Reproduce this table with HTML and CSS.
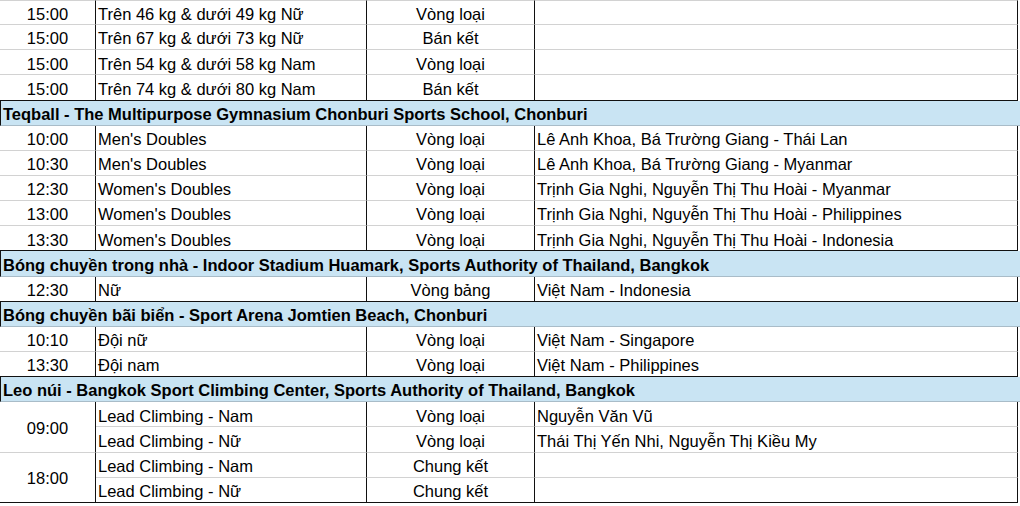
FILE: index.html
```html
<!DOCTYPE html>
<html lang="vi">
<head>
<meta charset="utf-8">
<title>Lịch thi đấu</title>
<link rel="stylesheet" href="styles.css">
</head>
<body>
<div class="sheet">
  <div class="c t first">15:00</div><div class="c e first">Trên 46 kg &amp; dưới 49 kg Nữ</div><div class="c r first">Vòng loại</div><div class="c p first"></div>
  <div class="c t">15:00</div><div class="c e">Trên 67 kg &amp; dưới 73 kg Nữ</div><div class="c r">Bán kết</div><div class="c p"></div>
  <div class="c t">15:00</div><div class="c e">Trên 54 kg &amp; dưới 58 kg Nam</div><div class="c r">Vòng loại</div><div class="c p"></div>
  <div class="c t end">15:00</div><div class="c e end">Trên 74 kg &amp; dưới 80 kg Nam</div><div class="c r end">Bán kết</div><div class="c p end"></div>

  <div class="c h">Teqball - The Multipurpose Gymnasium Chonburi Sports School, Chonburi</div>
  <div class="c t">10:00</div><div class="c e">Men's Doubles</div><div class="c r">Vòng loại</div><div class="c p">Lê Anh Khoa, Bá Trường Giang - Thái Lan</div>
  <div class="c t">10:30</div><div class="c e">Men's Doubles</div><div class="c r">Vòng loại</div><div class="c p">Lê Anh Khoa, Bá Trường Giang - Myanmar</div>
  <div class="c t">12:30</div><div class="c e">Women's Doubles</div><div class="c r">Vòng loại</div><div class="c p">Trịnh Gia Nghi, Nguyễn Thị Thu Hoài - Myanmar</div>
  <div class="c t">13:00</div><div class="c e">Women's Doubles</div><div class="c r">Vòng loại</div><div class="c p">Trịnh Gia Nghi, Nguyễn Thị Thu Hoài - Philippines</div>
  <div class="c t end">13:30</div><div class="c e end">Women's Doubles</div><div class="c r end">Vòng loại</div><div class="c p end">Trịnh Gia Nghi, Nguyễn Thị Thu Hoài - Indonesia</div>

  <div class="c h">Bóng chuyền trong nhà - Indoor Stadium Huamark, Sports Authority of Thailand, Bangkok</div>
  <div class="c t end">12:30</div><div class="c e end">Nữ</div><div class="c r end">Vòng bảng</div><div class="c p end">Việt Nam - Indonesia</div>

  <div class="c h">Bóng chuyền bãi biển - Sport Arena Jomtien Beach, Chonburi</div>
  <div class="c t">10:10</div><div class="c e">Đội nữ</div><div class="c r">Vòng loại</div><div class="c p">Việt Nam - Singapore</div>
  <div class="c t end">13:30</div><div class="c e end">Đội nam</div><div class="c r end">Vòng loại</div><div class="c p end">Việt Nam - Philippines</div>

  <div class="c h">Leo núi - Bangkok Sport Climbing Center, Sports Authority of Thailand, Bangkok</div>
  <div class="c t span2">09:00</div><div class="c e">Lead Climbing - Nam</div><div class="c r">Vòng loại</div><div class="c p">Nguyễn Văn Vũ</div>
  <div class="c e">Lead Climbing - Nữ</div><div class="c r">Vòng loại</div><div class="c p">Thái Thị Yến Nhi, Nguyễn Thị Kiều My</div>
  <div class="c t span2 end">18:00</div><div class="c e">Lead Climbing - Nam</div><div class="c r">Chung kết</div><div class="c p"></div>
  <div class="c e end">Lead Climbing - Nữ</div><div class="c r end">Chung kết</div><div class="c p end"></div>
</div>
</body>
</html>
```

FILE: styles.css
```css
html, body {
  margin: 0;
  padding: 0;
  background: #ffffff;
}

body {
  font-family: "Liberation Sans", Arial, sans-serif;
  font-size: 16.5px;
  color: #000000;
  width: 1020px;
  height: 506px;
  overflow: hidden;
}

.sheet {
  display: grid;
  grid-template-columns: 96px 271px 168px 483px 2px;
  grid-auto-rows: 25.15px;
  width: 1020px;
}

.c {
  box-sizing: border-box;
  display: flex;
  align-items: center;
  white-space: nowrap;
  overflow: hidden;
  border-bottom: 1px solid #d2d2d2;
  border-right: 1.5px solid #111111;
  line-height: 1;
  padding-top: 3px;
}

.first {
  border-top: 1px solid #d2d2d2;
}

.t {
  grid-column: 1;
  justify-content: center;
}

.e {
  grid-column: 2;
  padding-left: 2px;
}

.r {
  grid-column: 3;
  justify-content: center;
}

.p {
  grid-column: 4;
  padding-left: 2px;
}

.span2 {
  grid-row: span 2;
}

.end {
  border-bottom: 1.5px solid #111111;
}

.h {
  grid-column: 1 / -1;
  background: #c9e4f3;
  border-right: none;
  border-left: 1.5px solid #111111;
  border-bottom: 1px solid #a9bcc8;
  font-weight: bold;
  padding-left: 2px;
}
```
